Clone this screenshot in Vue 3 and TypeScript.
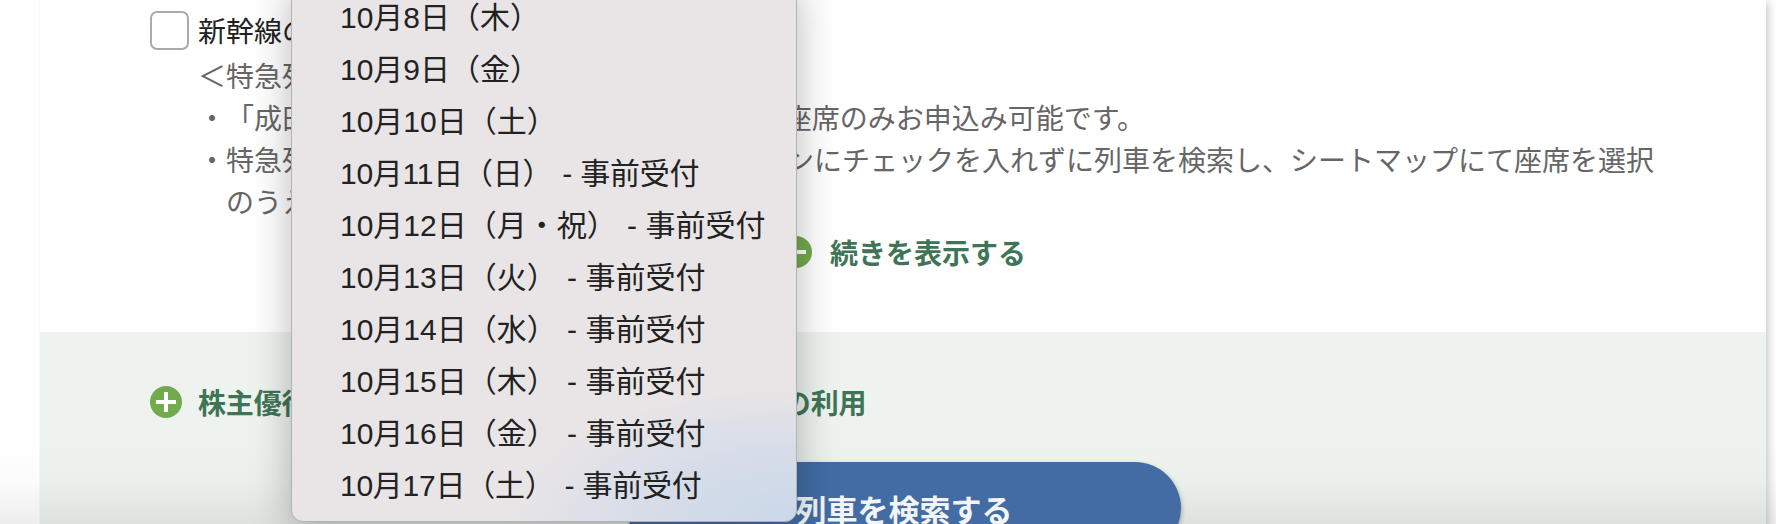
<script setup lang="ts">
interface DateOption { label: string; note: boolean; kerned?: boolean }
const dates: DateOption[] = [
  { label: '10月8日（木）', note: false },
  { label: '10月9日（金）', note: false },
  { label: '10月10日（土）', note: false },
  { label: '10月11日（日）', note: true, kerned: true },
  { label: '10月12日（月・祝）', note: true },
  { label: '10月13日（火）', note: true },
  { label: '10月14日（水）', note: true },
  { label: '10月15日（木）', note: true },
  { label: '10月16日（金）', note: true },
  { label: '10月17日（土）', note: true, kerned: true },
]
</script>

<template>
  <div class="page">
    <main class="card">
      <section class="upper">
        <label class="check-row">
          <span class="checkbox"></span>
          <span class="check-label">新幹線の座席を指定する</span>
        </label>
        <div class="notes">
          <p class="note-head">＜特急列車の座席指定について＞</p>
          <p class="note-item">・「成田エクスプレス」は、グリーン車以外の座席のみお申込み可能です。</p>
          <p class="note-item">・特急列車の座席を指定する場合は、オプションにチェックを入れずに列車を検索し、シートマップにて座席を選択のうえ、お申込みください。</p>
        </div>
        <a class="toggle toggle-center">
          <svg class="icon" viewBox="0 0 32 32"><circle cx="16" cy="16" r="16" fill="#72ab4e" /><rect x="6" y="14" width="20" height="4" fill="#fff" /></svg>
          <span>続きを表示する</span>
        </a>
      </section>
      <section class="lower">
        <a class="toggle toggle-left">
          <svg class="icon" viewBox="0 0 32 32"><circle cx="16" cy="16" r="16" fill="#72ab4e" /><rect x="6" y="14" width="20" height="4" fill="#fff" /><rect x="14" y="6" width="4" height="20" fill="#fff" /></svg>
          <span class="tight">株主優待券（旅客運賃・料金割引券）クーポンの利用</span>
        </a>
        <button class="search" type="button">列車を検索する</button>
      </section>
    </main>
    <div class="fade"></div>
    <ul class="menu">
      <li v-for="d in dates" :key="d.label" :class="{ kerned: d.kerned }">{{ d.label }}<span v-if="d.note" class="suffix"> - 事前受付</span></li>
    </ul>
  </div>
</template>

<style>
html, body { margin: 0; background: #fff; }
</style>

<style scoped>
.page {
  position: relative;
  height: 524px;
  overflow: hidden;
  background: #fff;
  font-family: "Liberation Sans", "Noto Sans CJK JP", sans-serif;
  font-size: 28px;
  text-spacing-trim: space-all;
}
.card {
  margin: 0 10px 0 40px;
  height: 700px;
  background: #fff;
  box-shadow: 5px 0 8px -2px rgba(0, 0, 0, 0.2), -1px 0 0 #f9f9f9;
}
.upper {
  height: 332px;
  box-sizing: border-box;
  padding: 11px 110px 0 110px;
}
.check-row { display: flex; gap: 9px; align-items: flex-start; color: #222; }
.checkbox {
  flex: none;
  width: 39px;
  height: 39px;
  box-sizing: border-box;
  border: 2px solid #aaa;
  border-radius: 7px;
  background: #fff;
}
.check-label { line-height: 44px; }
.notes { padding-left: 48px; margin-top: 2px; color: #666; line-height: 42px; }
.notes p { margin: 0; }
.note-item { padding-left: 28px; text-indent: -28px; }
.toggle {
  display: flex;
  align-items: center;
  gap: 18px;
  height: 40px;
  font-weight: 700;
  color: #3f7556;
}
.toggle-center { justify-content: center; margin-top: 7px; }
.toggle-left { gap: 16px; }
.tight { letter-spacing: -0.15px; }
.icon { width: 32px; height: 32px; flex: none; }
.lower {
  background: #eef3f0;
  padding: 50px 0 0 110px;
  height: 368px;
  box-sizing: border-box;
}
.search {
  position: relative;
  z-index: 1;
  display: block;
  width: 554px;
  height: 92px;
  margin: 40px 0 0 477px;
  border: none;
  border-radius: 46px;
  background: #426ca3;
  color: #f2f4f7;
  font: inherit;
  font-size: 31px;
  font-weight: 700;
  box-shadow: 1px 2px 4px rgba(0, 0, 0, 0.25);
}
.fade {
  position: absolute;
  left: 0;
  right: 0;
  bottom: 0;
  height: 84px;
  background: linear-gradient(to bottom, rgba(0, 0, 0, 0), rgba(0, 0, 0, 0.015) 50%, rgba(0, 0, 0, 0.07));
}
.menu {
  position: absolute;
  z-index: 2;
  left: 291px;
  top: -20px;
  width: 506px;
  height: 542px;
  box-sizing: border-box;
  margin: 0;
  padding: 11px 0 11px 48px;
  list-style: none;
  border: 1px solid #b3b1b2;
  border-radius: 0 0 12px 12px;
  background:
    radial-gradient(ellipse 290px 135px at 100% 100%, #cad8e9 0%, rgba(203, 216, 233, 0.6) 55%, rgba(203, 216, 233, 0) 100%),
    #e9e5e7;
  box-shadow: 0 8px 40px rgba(0, 0, 0, 0.28);
  color: #222;
  font-size: 30px;
}
.menu li { height: 52px; line-height: 52px; white-space: pre; }
.menu li.kerned { letter-spacing: -0.25px; }
.suffix { margin-left: 2px; }
</style>
